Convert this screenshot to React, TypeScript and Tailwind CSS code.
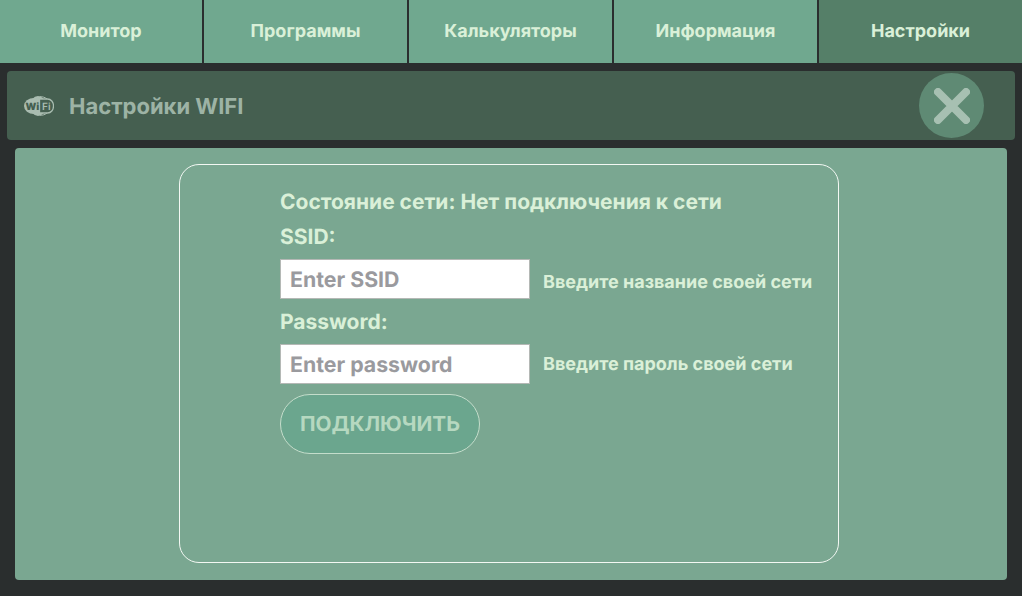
import React from "react";

const tabs = ["Монитор", "Программы", "Калькуляторы", "Информация", "Настройки"];

function WifiLogo() {
  return (
    <svg width="30" height="20" viewBox="0 0 30 20" className="shrink-0">
      <ellipse cx="10" cy="10" rx="10" ry="8" fill="#a9bcb0" />
      <ellipse cx="14" cy="10" rx="8" ry="10" fill="#a9bcb0" />
      <path d="M15.500 3h8c3.500 0 6 3 6 7s-2.500 7-6 7h-8z" fill="#455f50" stroke="#a9bcb0" strokeWidth="1.300" />
      <path d="M15.500 .7c3.500 0 5.500 .6 7.500 2.300M15.500 19.300c3.500 0 5.500-.6 7.500-2.300" stroke="#a9bcb0" strokeWidth="1" fill="none" />
      <text x="1.500" y="14" fontSize="10" fontWeight="900" fill="#455f50" fontFamily="Inter, sans-serif">Wi</text>
      <text x="18" y="14" fontSize="10" fontWeight="600" fill="#a9bcb0" fontFamily="Inter, sans-serif">Fi</text>
    </svg>
  );
}

export default function App() {
  return (
    <div className="w-[1022px] h-[596px] overflow-hidden bg-[#2a2e2e] font-['Inter',sans-serif] [text-rendering:geometricPrecision] flex flex-col">
      <nav className="grid grid-cols-[204px_205px_205px_205px_203px] h-[63px] shrink-0">
        {tabs.map((t, i) => (
          <div
            key={t}
            className={`flex items-center justify-center text-[18px] font-bold text-[#daf0d8] ${
              i === 4 ? "bg-[#557f68]" : "bg-[#70a88f] border-r-2 border-[#2a2e2e]"
            }`}
          >
            {t}
          </div>
        ))}
      </nav>

      <header className="mt-2 mx-[7px] h-[69px] shrink-0 rounded bg-[#455f50] flex items-center pl-[17px] pr-[31px]">
        <WifiLogo />
        <h1 className="ml-[15px] mt-[3px] text-[22px] font-bold text-[#9db3a5]">Настройки WIFI</h1>
        <button className="ml-auto w-[65px] h-[65px] rounded-full bg-[#5f8a74] flex items-center justify-center">
          <svg width="36" height="36" viewBox="0 0 36 36">
            <path d="M4 4 L32 32 M32 4 L4 32" stroke="#a7c0b2" strokeWidth="8" strokeLinecap="round" />
          </svg>
        </button>
      </header>

      <main className="mt-2 mx-[15px] h-[432px] shrink-0 rounded bg-[#7aa791] pt-4 flex justify-center">
        <section className="w-[660px] h-[399px] -translate-x-[2px] rounded-[20px] border border-[#f3f8f3] pl-[100px] pt-[23px] text-[#daf0d8] font-bold">
          <div className="text-[21px] leading-[30px]">Состояние сети: Нет подключения к сети</div>
          <label className="block mt-[5px] text-[21px] leading-[30px]">SSID:</label>
          <div className="mt-[6px] flex items-center">
            <input
              placeholder="Enter SSID"
              className="w-[250px] h-10 border border-[#b4b8b5] bg-white pl-[9px] pr-[9px] pt-[2px] text-[21.300px] font-bold text-[#111] placeholder:text-[#9a9a9e] outline-none [text-rendering:geometricPrecision]"
            />
            <span className="ml-[13px] mt-[7px] text-[18px]">Введите название своей сети</span>
          </div>
          <label className="block mt-[9px] text-[21px] leading-[30px]">Password:</label>
          <div className="mt-[6px] flex items-center">
            <input
              placeholder="Enter password"
              className="w-[250px] h-10 border border-[#b4b8b5] bg-white pl-[9px] pr-[9px] pt-[2px] text-[21.300px] font-bold text-[#111] placeholder:text-[#9a9a9e] outline-none [text-rendering:geometricPrecision]"
            />
            <span className="ml-[13px] text-[18px]">Введите пароль своей сети</span>
          </div>
          <button className="mt-[10px] block w-[200px] h-[60px] pt-[2px] rounded-full border border-[#c4ddcb] bg-[#6ba68e] text-[20.800px] font-bold text-[#b6d8c0] [text-rendering:geometricPrecision]">
            ПОДКЛЮЧИТЬ
          </button>
        </section>
      </main>
    </div>
  );
}
